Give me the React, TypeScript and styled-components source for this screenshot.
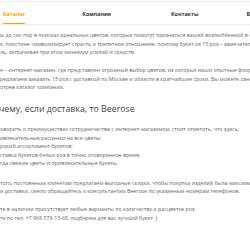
import React from "react";
import styled, { createGlobalStyle } from "styled-components";

const Global = createGlobalStyle`
  html, body { margin: 0; padding: 0; background: #fff; }
  body { overflow: hidden; width: 250px; height: 250px; }
`;

const Page = styled.div`
  width: 250px;
  height: 250px;
  overflow: hidden;
  font-family: "Open Sans", "Liberation Sans", sans-serif;
  padding-top: 1px;
  box-sizing: border-box;
`;

const Nav = styled.nav`
  display: flex;
  align-items: stretch;
  height: 22px;
  border-top: 1px solid #ececec;
  border-bottom: 1px solid #ececec;
  white-space: nowrap;
  overflow: hidden;
`;

const Tab = styled.a<{ $active?: boolean; $ml: number }>`
  flex-shrink: 0;
  display: flex;
  align-items: center;
  margin-left: ${(p) => p.$ml}px;
  font-size: 5.35px;
  font-weight: 700;
  color: ${(p) => (p.$active ? "#f2a900" : "#333")};
  text-decoration: none;
  position: relative;
  padding-top: 1px;
  &::after {
    content: "";
    display: ${(p) => (p.$active ? "block" : "none")};
    position: absolute;
    left: 0;
    right: 0;
    bottom: 0;
    height: 1px;
    background: #f2a900;
  }
`;

const Content = styled.div`
  padding-top: 6px;
  color: #666;
  font-size: 5.25px;
  line-height: 8.5px;
`;

const Para = styled.p`
  margin: 0 0 9.5px;
`;

const Line = styled.span`
  display: block;
  white-space: nowrap;
`;

const Heading = styled.h2`
  margin: 0 0 10px -1px;
  padding-top: 2px;
  font-size: 8.8px;
  line-height: 12px;
  font-weight: 400;
  color: #444;
  white-space: nowrap;
`;

const List = styled.ul`
  margin: 0 0 11px;
  padding: 0;
  list-style: none;
`;

export default function App() {
  return (
    <>
      <Global />
      <Page>
        <Nav>
          <Tab $active $ml={3}>Каталог</Tab>
          <Tab $ml={57}>Компания</Tab>
          <Tab $ml={60}>Контакты</Tab>
          <Tab $ml={48}>Блог</Tab>
        </Nav>
        <Content>
          <Para>
            <Line>ы до сих пор в поисках идеальных цветов, которые помогут признаться вашей возлюбленной в своих чувствах.</Line>
            <Line>к, поистине символизирует страсть и трепетное отношение, поэтому букет из 15 роз – замечательный вариант</Line>
            <Line>ль, затрачивая при этом минимум усилий и средств.</Line>
          </Para>
          <Para>
            <Line>е – интернет-магазин, где представлен огромный выбор цветов, из которых наши опытные флористы соберут</Line>
            <Line>редлагаем заказать 15 роз с доставкой по Москве и области в кратчайшие сроки. Вы можете ознакомиться</Line>
            <Line>отрев каталог компании.</Line>
          </Para>
          <Heading>чему, если доставка, то Beerose</Heading>
          <List>
            <Line as="li">оворить о преимуществах сотрудничества с интернет-магазином, стоит отметить, что здесь:</Line>
            <Line as="li">ивлекательные расценки на все цветы;</Line>
            <Line as="li">рокий ассортимент букетов;</Line>
            <Line as="li">ставка букетов белых роз в точно оговоренное время;</Line>
            <Line as="li">гда свежие цветы и привлекательные букеты.</Line>
          </List>
          <Para>
            <Line>того, постоянным клиентам предлагаем выгодные скидки, чтобы покупка изделий была максимально выгодной.</Line>
            <Line>и доставки, смело обращайтесь к консультантам Beerose по указанным номерам телефонов.</Line>
          </Para>
          <Para>
            <Line>те в наличии присутствует любые варианты по количеству и расцветке роз.</Line>
            <Line>те по тел. +7 968 578-13-68, подберем для вас лучший букет :)</Line>
          </Para>
        </Content>
      </Page>
    </>
  );
}
